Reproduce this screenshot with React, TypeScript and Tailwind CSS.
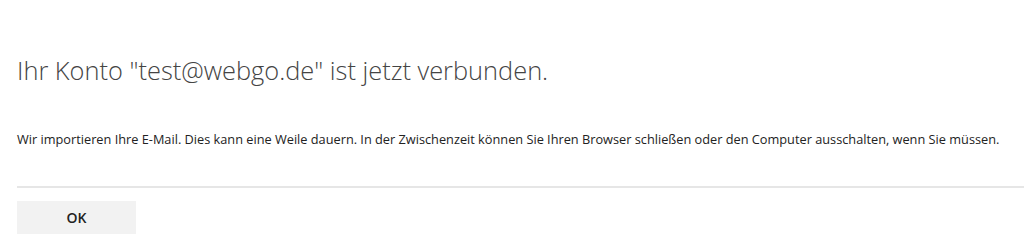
export default function App() {
  return (
    <div className="h-[243px] w-[1024px] overflow-hidden bg-white pl-[17px] font-['Open_Sans',sans-serif]">
      <h1 className="pt-[52px] text-[25.4px] font-light leading-[36px] text-[#444]">
        Ihr Konto "test@webgo.de" ist jetzt verbunden.
      </h1>
      <p className="mt-[43px] text-[12.75px] leading-[16px] text-[#222]">
        Wir importieren Ihre E-Mail. Dies kann eine Weile dauern. In der Zwischenzeit können Sie Ihren Browser schließen oder den Computer ausschalten, wenn Sie müssen.
      </p>
      <div className="mt-[39px] h-[2px] bg-[#e6e6e6]" />
      <button
        type="button"
        className="mt-[13px] h-[33px] w-[119px] bg-[#f2f2f2] text-[14px] font-semibold text-[#222]"
      >
        OK
      </button>
    </div>
  );
}
